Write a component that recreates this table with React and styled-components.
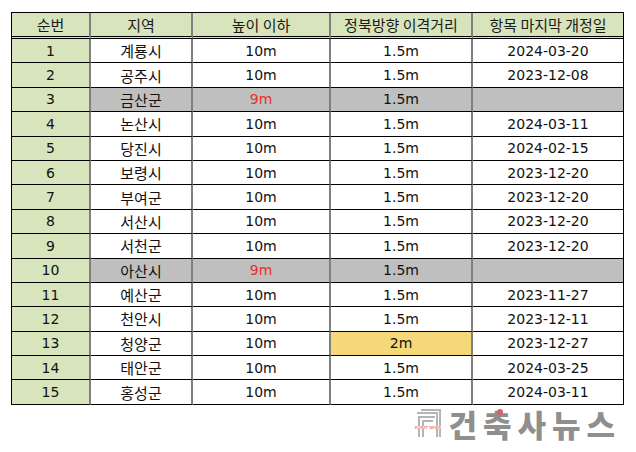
import styled, { createGlobalStyle } from 'styled-components'

const GlobalStyle = createGlobalStyle`
    body {
        margin: 0;
        background: #fff;
        font-family: "DejaVu Sans", "Noto Sans CJK KR", sans-serif;
    }
`;

const Page = styled.div`
    width: 636px;
    height: 452px;
    padding: 12px 0 0 11px;
    box-sizing: border-box;
`;

const Table = styled.table`
    border-collapse: separate;
    border-spacing: 0;
    border: 1px solid #000;
    border-bottom: none;
    table-layout: fixed;
    width: 613px;
    font-size: 14px;
    color: #111;
`;

const HeadCell = styled.th`
    height: 23px;
    padding: 0;
    font-weight: 400;
    font-size: 15px;
    background: #d8e4bc;
    border-bottom: 3px double #000;
    border-right: ${p => (p.$last ? 'none' : '2px solid #7f7f7f')};
    text-align: center;
    font-family: "Noto Sans CJK KR", sans-serif;
    color: #1a1a1a;
`;

const Row = styled.tr`
    height: 24.4px;
`;

const Cell = styled.td`
    padding: 0;
    text-align: center;
    border-bottom: 1px solid #000;
    border-right: ${p => (p.$last ? 'none' : '2px solid #7f7f7f')};
    background: ${p => p.$bg || '#fff'};
    color: ${p => p.$color || '#111'};
    font-size: ${p => (p.$kr ? '15px' : '14px')};
    font-family: ${p => (p.$kr ? '"Noto Sans CJK KR", sans-serif' : '"DejaVu Sans", "Noto Sans CJK KR", sans-serif')};
`;

const Mark = styled.div`
    display: flex;
    align-items: center;
    justify-content: flex-end;
    gap: 5px;
    width: 610px;
    margin-top: 1px;
`;

const MarkText = styled.div`
    position: relative;
    font-family: "Noto Sans CJK KR", sans-serif;
    font-weight: 900;
    font-size: 31px;
    letter-spacing: 6px;
    color: #8f8f8f;
    line-height: 36px;
`;

const Dot = styled.span`
    position: absolute;
    left: 49px;
    top: 3px;
    width: 6px;
    height: 6px;
    border-radius: 50%;
    background: #e0605c;
`;

const GREEN = '#d8e4bc';
const GRAY = '#bfbfbf';
const YELLOW = '#f5d878';

const rows = [
    ['1', '계룡시', '10m', '1.5m', '2024-03-20'],
    ['2', '공주시', '10m', '1.5m', '2023-12-08'],
    ['3', '금산군', '9m', '1.5m', '', true],
    ['4', '논산시', '10m', '1.5m', '2024-03-11'],
    ['5', '당진시', '10m', '1.5m', '2024-02-15'],
    ['6', '보령시', '10m', '1.5m', '2023-12-20'],
    ['7', '부여군', '10m', '1.5m', '2023-12-20'],
    ['8', '서산시', '10m', '1.5m', '2023-12-20'],
    ['9', '서천군', '10m', '1.5m', '2023-12-20'],
    ['10', '아산시', '9m', '1.5m', '', true],
    ['11', '예산군', '10m', '1.5m', '2023-11-27'],
    ['12', '천안시', '10m', '1.5m', '2023-12-11'],
    ['13', '청양군', '10m', '2m', '2023-12-27'],
    ['14', '태안군', '10m', '1.5m', '2024-03-25'],
    ['15', '홍성군', '10m', '1.5m', '2024-03-11'],
];

function Logo() {
    return (
        <svg width="30" height="30" viewBox="0 0 30 30">
            <g fill="none" stroke="#b5b5b5" strokeWidth="2">
                <path d="M6 28 V8 H22" />
                <path d="M10 28 V12 H20" />
                <path d="M24 28 V4 H4" />
                <path d="M27 28 V1 H8" />
            </g>
            <rect x="0" y="17" width="30" height="3" fill="#fff" />
            <text x="15" y="20" fontSize="4" fill="#e05050" textAnchor="middle" fontFamily="DejaVu Sans">KORAT NEWS</text>
        </svg>
    );
}

function App() {
    return (
        <Page>
            <GlobalStyle />
            <Table>
                <colgroup>
                    <col style={{ width: 79 }} />
                    <col style={{ width: 102 }} />
                    <col style={{ width: 138 }} />
                    <col style={{ width: 142 }} />
                    <col />
                </colgroup>
                <thead>
                    <tr>
                        <HeadCell>순번</HeadCell>
                        <HeadCell>지역</HeadCell>
                        <HeadCell>높이 이하</HeadCell>
                        <HeadCell>정북방향 이격거리</HeadCell>
                        <HeadCell $last>항목 마지막 개정일</HeadCell>
                    </tr>
                </thead>
                <tbody>
                    {rows.map(([no, area, height, dist, date, gray]) => (
                        <Row key={no}>
                            <Cell $bg={GREEN}>{no}</Cell>
                            <Cell $kr $bg={gray ? GRAY : null}>{area}</Cell>
                            <Cell $bg={gray ? GRAY : null} $color={gray ? '#e8302c' : null}>{height}</Cell>
                            <Cell $bg={gray ? GRAY : dist === '2m' ? YELLOW : null}>{dist}</Cell>
                            <Cell $last $bg={gray ? GRAY : null}>{date}</Cell>
                        </Row>
                    ))}
                </tbody>
            </Table>
            <Mark>
                <Logo />
                <MarkText>
                    건축사뉴스
                    <Dot />
                </MarkText>
            </Mark>
        </Page>
    );
}

export default App;
